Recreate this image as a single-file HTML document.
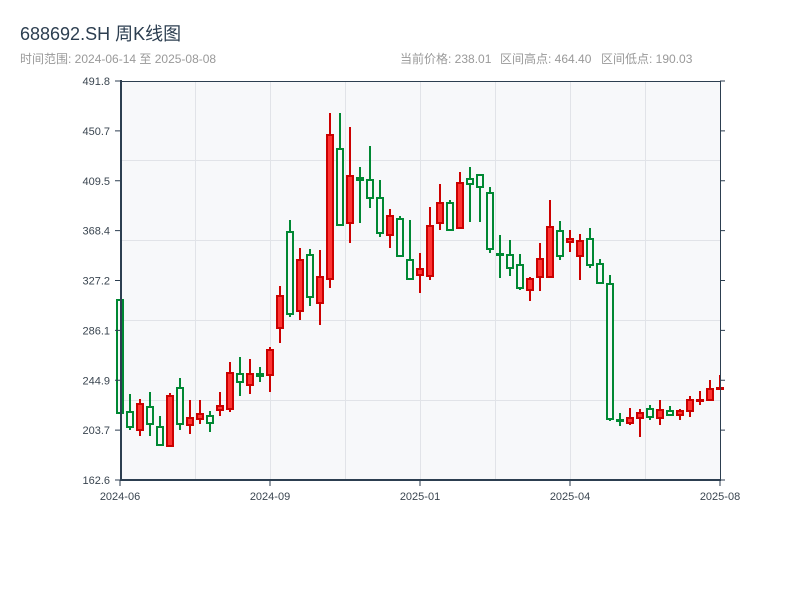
<!DOCTYPE html>
<html><head><meta charset="utf-8"><style>
body{margin:0;background:#fff;width:800px;height:600px;overflow:hidden;font-family:"Liberation Sans","Noto Sans CJK SC",sans-serif}
</style></head><body>
<svg width="800" height="600" xmlns="http://www.w3.org/2000/svg" style="position:absolute;left:0;top:0">
<text x="20" y="40" font-size="18" fill="#2c3e50" font-family="Liberation Sans, Noto Sans CJK SC, sans-serif">688692.SH 周K线图</text>
<text x="20" y="63" font-size="12" fill="#999" font-family="Liberation Sans, Noto Sans CJK SC, sans-serif">时间范围: 2024-06-14 至 2025-08-08</text>
<g font-size="12" fill="#999" font-family="Liberation Sans, Noto Sans CJK SC, sans-serif">
<text x="400" y="63">当前价格: 238.01</text>
<text x="500" y="63">区间高点: 464.40</text>
<text x="601" y="63">区间低点: 190.03</text>
</g>
<rect x="121" y="81" width="599" height="399" fill="#f7f8fa"/>
<g stroke="#e1e3e8" stroke-width="1">
<line x1="195.5" y1="81" x2="195.5" y2="480"/><line x1="270.5" y1="81" x2="270.5" y2="480"/><line x1="345.5" y1="81" x2="345.5" y2="480"/><line x1="420.5" y1="81" x2="420.5" y2="480"/><line x1="495.5" y1="81" x2="495.5" y2="480"/><line x1="570.5" y1="81" x2="570.5" y2="480"/><line x1="645.5" y1="81" x2="645.5" y2="480"/>
<line x1="121" y1="160.5" x2="720" y2="160.5"/><line x1="121" y1="240.5" x2="720" y2="240.5"/><line x1="121" y1="320.5" x2="720" y2="320.5"/><line x1="121" y1="400.5" x2="720" y2="400.5"/>
</g>
<g id="c"></g>
<g stroke="#2c3e50">
<line x1="121" y1="81.5" x2="720" y2="81.5" stroke-width="1"/>
<line x1="720.5" y1="81" x2="720.5" y2="480" stroke-width="1"/>
<line x1="121" y1="80" x2="121" y2="481" stroke-width="2"/>
<line x1="120" y1="480" x2="721" y2="480" stroke-width="2"/>
</g>
<g id="t" stroke="#2c3e50" stroke-width="1"></g>
<g id="l" font-size="11" fill="#3a4550" font-family="Liberation Sans, sans-serif"></g>
</svg>
<script>
var d=[[300,413,300,413,'g'],[412,427,394,430,'g'],[404,430,399,436,'r'],[407,424,392,436,'g'],[427,445,416,445,'g'],[396,446,393,446,'r'],[388,424,378,430,'g'],[418,425,400,434,'r'],[414,419,400,424,'r'],[416,423,411,432,'g'],[406,410,392,416,'r'],[373,409,362,412,'r'],[374,382,357,396,'g'],[374,385,359,394,'r'],[374,376,367,382,'g'],[350,375,347,392,'r'],[296,328,286,343,'r'],[232,314,220,317,'g'],[260,311,248,320,'r'],[255,297,249,306,'g'],[277,303,250,325,'r'],[135,279,113,288,'r'],[149,225,113,225,'g'],[176,223,127,243,'r'],[178,180,167,223,'g'],[180,198,146,208,'g'],[198,233,180,237,'g'],[216,235,209,248,'r'],[219,256,216,257,'g'],[260,279,220,280,'g'],[269,275,253,293,'r'],[226,276,207,280,'r'],[203,223,184,230,'r'],[203,230,200,231,'g'],[183,228,172,228,'r'],[179,184,167,222,'g'],[175,187,174,222,'g'],[193,249,187,253,'g'],[254,255,235,278,'g'],[255,268,240,276,'g'],[265,288,254,290,'g'],[279,290,277,301,'r'],[259,277,243,291,'r'],[227,277,200,278,'r'],[231,256,221,260,'g'],[239,242,230,252,'r'],[241,256,234,280,'r'],[239,265,228,268,'g'],[264,283,259,283,'g'],[284,419,275,421,'g'],[420,421,413,426,'g'],[418,423,408,425,'r'],[413,418,409,437,'r'],[409,417,405,420,'g'],[410,418,400,425,'r'],[411,415,406,416,'g'],[411,415,409,420,'r'],[400,411,396,417,'r'],[400,401,391,405,'r'],[389,400,380,400,'r'],[388,389,375,390,'r']];
var s='';d.forEach(function(c,i){var x=120+10*i,col=c[4]=='r'?'#cc0000':'#008833',fill=c[4]=='r'?'#ff3333':'#f7f8fa';
s+='<line x1="'+x+'" y1="'+c[2]+'" x2="'+x+'" y2="'+c[3]+'" stroke="'+col+'" stroke-width="2"/>';
s+='<rect x="'+(x-3)+'" y="'+c[0]+'" width="6" height="'+Math.max(1,c[1]-c[0])+'" fill="'+fill+'" stroke="'+col+'" stroke-width="2"/>';});
document.getElementById('c').innerHTML=s;
var labs=['491.8','450.7','409.5','368.4','327.2','286.1','244.9','203.7','162.6'],t='',l='';
labs.forEach(function(v,i){var y=81+i*49.875;t+='<line x1="115" y1="'+y+'" x2="121" y2="'+y+'"/><line x1="720" y1="'+y+'" x2="725" y2="'+y+'"/>';l+='<text x="110" y="'+(y+4)+'" text-anchor="end">'+v+'</text>';});
[[120,'2024-06'],[270,'2024-09'],[420,'2025-01'],[570,'2025-04'],[720,'2025-08']].forEach(function(a){t+='<line x1="'+a[0]+'" y1="480" x2="'+a[0]+'" y2="486"/>';l+='<text x="'+a[0]+'" y="500" text-anchor="middle">'+a[1]+'</text>';});
document.getElementById('t').innerHTML=t;document.getElementById('l').innerHTML=l;
</script>
</body></html>
